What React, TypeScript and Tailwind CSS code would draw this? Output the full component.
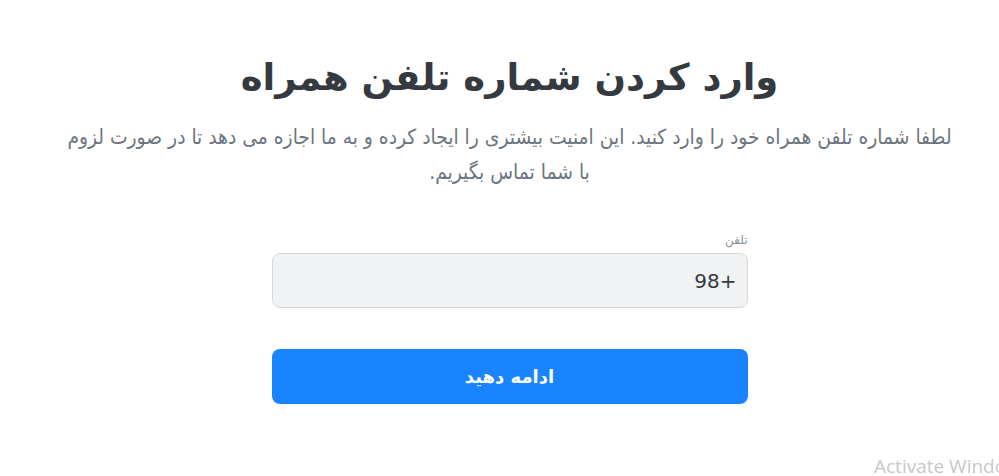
import React, { useState } from 'react';

export default function App() {
  const [phone, setPhone] = useState('+98');

  return (
    <div
      dir="rtl"
      className="relative h-[476px] w-full overflow-hidden bg-white flex flex-col items-center pt-[52px] pl-[20px]"
      style={{ fontFamily: '"DejaVu Sans", sans-serif' }}
    >
      <h1 className="text-[37px] leading-[52px] font-bold text-[#343a40]">وارد کردن شماره تلفن همراه</h1>
      <p className="mt-[16px] w-[890px] text-center text-[20.8px] leading-[35px] text-[#6c757d] [font-family:'DejaVu_Sans_Condensed','DejaVu_Sans',sans-serif]">
        لطفا شماره تلفن همراه خود را وارد کنید. این امنیت بیشتری را ایجاد کرده و به ما اجازه می دهد تا در صورت لزوم با شما تماس بگیریم.
      </p>

      <form className="mt-[42px] w-[476px] flex flex-col" onSubmit={e => e.preventDefault()}>
        <label className="text-[12px] leading-[16px] text-[#8a9096] mb-[5px]">تلفن</label>
        <input
          value={phone}
          onChange={e => setPhone(e.target.value)}
          className="h-[55px] w-full rounded-lg border border-[#d6d9dc] bg-[#f1f2f4] pl-[12px] pr-[10px] text-right text-[20px] text-[#343a40] outline-none"
        />
        <button
          type="submit"
          className="mt-[41px] h-[55px] w-full rounded-lg bg-[#1a84ff] text-[18px] font-bold text-white"
        >
          ادامه دهید
        </button>
      </form>

      <div dir="ltr" className="absolute left-[874px] top-[453px] text-[19px] leading-[26px] text-[#c8c8c8] whitespace-nowrap" style={{ fontFamily: '"Open Sans", sans-serif' }}>
        Activate Windows
      </div>
    </div>
  );
}
